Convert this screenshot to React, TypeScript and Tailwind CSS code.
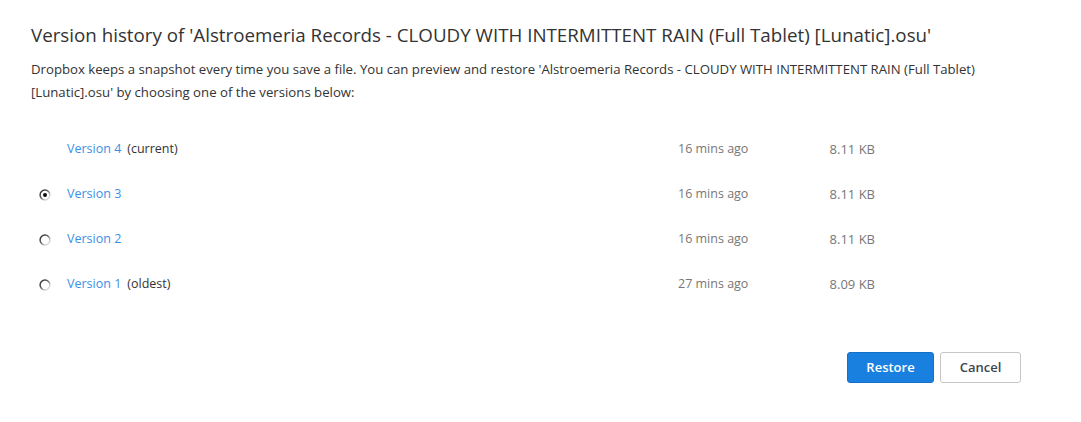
import React from 'react';

const versions = [
  { id: 4, label: 'Version 4', note: '(current)', time: '16 mins ago', size: '8.11 KB', radio: false },
  { id: 3, label: 'Version 3', note: '', time: '16 mins ago', size: '8.11 KB', radio: true },
  { id: 2, label: 'Version 2', note: '', time: '16 mins ago', size: '8.11 KB', radio: true },
  { id: 1, label: 'Version 1', note: '(oldest)', time: '27 mins ago', size: '8.09 KB', radio: true },
];

function Radio({ checked }: { checked: boolean }) {
  const gid = checked ? 'rg1' : 'rg0';
  return (
    <svg width="12" height="12" viewBox="0 0 12 12">
      <defs>
        <linearGradient id={gid} x1="0" y1="0" x2="1" y2="1">
          <stop offset="0" stopColor="#222" />
          <stop offset="0.45" stopColor="#666" />
          <stop offset="0.75" stopColor="#d0d0d0" />
          <stop offset="1" stopColor="#e8e8e8" />
        </linearGradient>
      </defs>
      <circle cx="6" cy="6" r="4.9" fill="#fff" stroke={`url(#${gid})`} strokeWidth="1.5" />
      {checked && <circle cx="6" cy="6" r="2" fill="#111" />}
    </svg>
  );
}

export default function App() {
  return (
    <div className="w-[1081px] h-[422px] bg-white" style={{ fontFamily: '"Open Sans", "Noto Sans", sans-serif' }}>
      <div className="pl-[31px] pt-[22px]">
        <h1 className="text-[18.75px] leading-[26px] text-[#333]">
          Version history of 'Alstroemeria Records - CLOUDY WITH INTERMITTENT RAIN (Full Tablet) [Lunatic].osu'
        </h1>
        <p className="mt-[10px] text-[13.2px] leading-[23px] text-[#333] w-[1000px]">
          Dropbox keeps a snapshot every time you save a file. You can preview and restore 'Alstroemeria Records - CLOUDY WITH INTERMITTENT RAIN (Full Tablet)
          <br />
          [Lunatic].osu' by choosing one of the versions below:
        </p>
      </div>

      <div className="mt-[23px]">
        {versions.map((v) => (
          <div key={v.id} className="flex items-center h-[45px] text-[12.5px]">
            <div className="w-[67px] pl-[39px] flex items-center">
              {v.radio && <Radio checked={v.id === 3} />}
            </div>
            <div className="w-[611px] flex items-center">
              <span className="text-[#3d8fe6]">{v.label}</span>
              {v.note && <span className="ml-[6px] text-[#333]">{v.note}</span>}
            </div>
            <div className="w-[140px] text-[#777]">{v.time}</div>
            <div className="w-[57px] text-right text-[#777] text-[13px]">{v.size}</div>
          </div>
        ))}
      </div>

      <div className="flex justify-end gap-[6px] pr-[60px] mt-[45px]">
        <button className="w-[87px] h-[31px] rounded-[3px] bg-[#1a80e0] border border-[#1570c8] text-white text-[13px] font-semibold">
          Restore
        </button>
        <button className="w-[81px] h-[31px] rounded-[3px] bg-white border border-[#c6c6c6] text-[#3d464d] text-[13px] font-semibold">
          Cancel
        </button>
      </div>
    </div>
  );
}
